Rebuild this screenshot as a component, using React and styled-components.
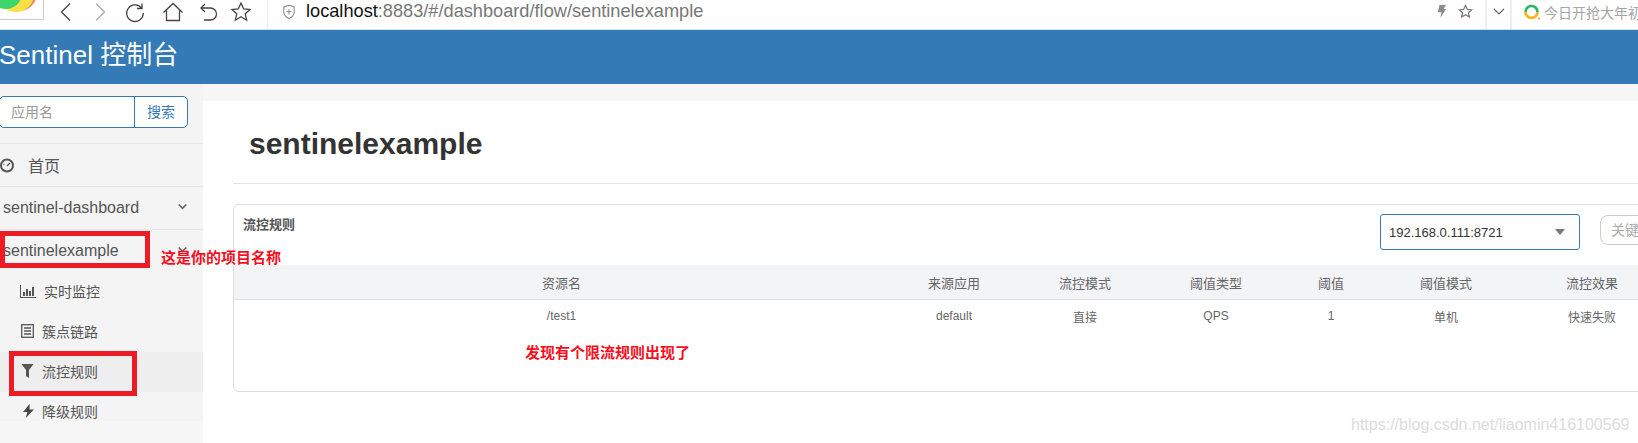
import React from 'react'
import styled, { createGlobalStyle } from 'styled-components'

const FONT = `"Liberation Sans", "Noto Sans CJK SC", sans-serif`

const GlobalStyle = createGlobalStyle`
  html, body { margin: 0; padding: 0; background: #f7f7f7; overflow: hidden; }
  body { font-family: ${FONT}; color: #555; }
  * { box-sizing: border-box; }
`

const Page = styled.div`
  position: relative;
  width: 1638px;
  height: 443px;
  overflow: hidden;
  display: flex;
  flex-direction: column;
`

/* browser chrome */
const BrowserBar = styled.div`
  height: 30px;
  flex: none;
  background: #fff;
  border-bottom: 1px solid #cfe0ee;
  display: flex;
  align-items: stretch;
  overflow: hidden;
`
const LogoTile = styled.div`
  width: 44px;
  height: 20px;
  flex: none;
  background: #fff;
  border-right: 1px solid #ccc;
  border-bottom: 1px solid #ccc;
  overflow: hidden;
  svg { display: block; }
`
const NavIcons = styled.div`
  width: 224px;
  flex: none;
  padding: 0 0 6px 11px;
  display: flex;
  align-items: center;
  border-right: 1px solid #eee;
`
const NavIcon = styled.svg`
  width: 22px;
  height: 22px;
  margin-right: ${p => p.$gap}px;
  fill: none;
  stroke: ${p => p.$dim ? '#aaa' : '#444'};
  stroke-width: 1.3;
  flex: none;
`
const UrlArea = styled.div`
  flex: 1;
  display: flex;
  align-items: center;
  padding: 0 0 6px 14px;
`
const Url = styled.div`
  font-size: 18.2px;
  color: #777;
  margin-left: 10px;
  span { color: #111; }
`
const RightTools = styled.div`
  display: flex;
  flex: none;
  width: 214px;
  overflow: hidden;
`
const ToolSlot = styled.div`
  flex: none;
  display: flex;
  align-items: center;
  justify-content: center;
  padding-bottom: 6px;
  width: ${p => p.$w}px;
  gap: ${p => p.$gap || 0}px;
  border-right: 2px solid #eee;
`
const SearchHint = styled.div`
  display: flex;
  align-items: center;
  gap: 4px;
  padding: 0 0 6px 12px;
  font-size: 14px;
  color: #a5a5a5;
  white-space: nowrap;
`

/* app header */
const Header = styled.header`
  height: 54px;
  flex: none;
  background: #337ab7;
  color: #fff;
  font-size: 26px;
  line-height: 51px;
  text-indent: -1px;
`

const Body = styled.div`
  flex: 1;
  display: flex;
  min-height: 0;
`

/* sidebar */
const Sidebar = styled.aside`
  width: 203px;
  height: 337px;
  flex: none;
  background: #f4f4f4;
  overflow: hidden;
`
const SearchWrap = styled.div`
  height: 60px;
  padding: 12px 15px 0 0;
  border-bottom: 1px solid #e7e7e7;
`
const SearchGroup = styled.div`
  display: flex;
  height: 32px;
  margin-left: -1px;
  border: 1px solid #337ab7;
  border-radius: 5px;
  background: #fff;
`
const SearchInput = styled.div`
  flex: 1;
  padding-left: 11px;
  font-size: 14px;
  line-height: 30px;
  color: #999;
`
const SearchBtn = styled.div`
  width: 53px;
  border-left: 1px solid #337ab7;
  color: #337ab7;
  font-size: 14px;
  line-height: 31px;
  text-align: center;
`
const HomeRow = styled.div`
  height: 43px;
  display: flex;
  align-items: center;
  font-size: 16px;
  color: #555;
  border-bottom: 1px solid #e7e7e7;
  svg { margin-right: 13px; flex: none; }
`
const AppRow = styled.div`
  height: ${p => p.$plain ? '42px' : '43px'};
  display: flex;
  align-items: center;
  justify-content: space-between;
  padding: 0 16px 0 3px;
  font-size: 16px;
  color: #555;
  border-bottom: ${p => p.$plain ? 'none' : '1px solid #e7e7e7'};
`
const Chevron = styled.svg`
  width: 9px;
  height: 7px;
  margin-top: -3px;
  fill: none;
  stroke: #666;
  stroke-width: 1.6;
`
const SubRow = styled.div`
  height: 40px;
  display: flex;
  align-items: center;
  font-size: 14px;
  color: #555;
  padding: 0 0 2px ${p => p.$pad}px;
  background: ${p => p.$active ? '#eee' : 'transparent'};
  svg { margin-right: 8px; flex: none; }
`

/* content */
const Content = styled.main`
  flex: 1;
  min-width: 0;
  margin-top: 17px;
  background: #fff;
  padding: 0 0 0 30px;
`
const Title = styled.h1`
  margin: 0;
  height: 83px;
  padding-left: 16px;
  font-size: 30px;
  font-weight: 700;
  line-height: 86px;
  color: #333;
  border-bottom: 1px solid #e5e5e5;
`
const Card = styled.section`
  width: 1500px;
  height: 188px;
  margin-top: 20px;
  border: 1px solid #ddd;
  border-radius: 6px;
  background: #fff;
`
const CardTop = styled.div`
  height: 60px;
  display: flex;
`
const CardTitle = styled.div`
  width: 1146px;
  flex: none;
  padding: 9px 0 0 9px;
  font-size: 13px;
  font-weight: 700;
  color: #555;
`
const Select = styled.div`
  width: 200px;
  height: 36px;
  margin-top: 9px;
  flex: none;
  border: 1px solid #337ab7;
  border-radius: 3px;
  padding: 0 14px 0 8px;
  display: flex;
  align-items: center;
  justify-content: space-between;
  font-size: 13px;
  color: #333;
  &::after {
    content: '';
    border-left: 5px solid transparent;
    border-right: 5px solid transparent;
    border-top: 6px solid #777;
  }
`
const Keyword = styled.div`
  width: 120px;
  height: 30px;
  margin: 10px 0 0 20px;
  flex: none;
  border: 1px solid #ccc;
  border-radius: 8px;
  padding-left: 10px;
  font-size: 14px;
  line-height: 28px;
  color: #aaa;
`
const Grid = styled.div`
  display: grid;
  grid-template-columns: 655px 130px 132px 130px 100px 130px 162px;
  align-items: center;
  text-align: center;
  font-size: ${p => p.$head ? '13px' : '12px'};
  color: #666;
  height: ${p => p.$head ? '35px' : '32px'};
  background: ${p => p.$head ? '#f3f4f6' : 'transparent'};
  border-bottom: ${p => p.$head ? '1px solid #ddd' : 'none'};
`

/* screenshot annotations drawn over the page */
const RedBox = styled.div`
  position: absolute;
  left: ${p => p.$x}px;
  top: ${p => p.$y}px;
  width: ${p => p.$w}px;
  height: ${p => p.$h}px;
  border: 5px solid #ed1c24;
`
const RedNote = styled.div`
  position: absolute;
  left: ${p => p.$x}px;
  top: ${p => p.$y}px;
  font-size: 15px;
  font-weight: 700;
  line-height: 18px;
  color: #f5101f;
  white-space: nowrap;
`
const Watermark = styled.div`
  position: absolute;
  left: 1351px;
  top: 415px;
  font-size: 16px;
  line-height: 20px;
  color: #dcdcdc;
  white-space: nowrap;
`

const HEADERS = ['资源名', '来源应用', '流控模式', '阈值类型', '阈值', '阈值模式', '流控效果']
const ROW = ['/test1', 'default', '直接', 'QPS', '1', '单机', '快速失败']

function DownChevron() {
  return (
    <Chevron viewBox="0 0 9 7"><path d="M.7 1.500L4.500 5.300 8.300 1.500" /></Chevron>
  )
}

function App() {
  return (
    <Page>
      <GlobalStyle />
      <BrowserBar>
        <LogoTile>
          <svg width="43" height="19" viewBox="0 0 43 19">
            <circle cx="19" cy="-7" r="18" fill="#f6826f" />
            <circle cx="16" cy="-6" r="18" fill="#fde047" />
            <circle cx="6" cy="-7" r="16" fill="#3ed66b" />
          </svg>
        </LogoTile>
        <NavIcons>
          <NavIcon $gap={12} viewBox="0 0 22 22"><path d="M15 2.500L6.500 11l8.500 8.500" /></NavIcon>
          <NavIcon $gap={13} $dim viewBox="0 0 22 22"><path d="M7 2.500l8.500 8.500L7 19.500" /></NavIcon>
          <NavIcon $gap={16} viewBox="0 0 22 22"><path d="M17.500 7A8.300 8.300 0 1 0 19.300 12M18 2.500V7.500h-5" /></NavIcon>
          <NavIcon $gap={13} viewBox="0 0 22 22"><path d="M1.500 11.500L11 2.500l9.500 9M4.500 9.500v10h13v-10" /></NavIcon>
          <NavIcon $gap={11} viewBox="0 0 22 22"><path d="M8 3L4 7l4 4M4 7h9.500a5.800 5.800 0 0 1 0 12H7" /></NavIcon>
          <NavIcon $gap={0} viewBox="0 0 22 22"><path d="M11 2l2.700 6 6.300.6-4.800 4.200 1.500 6.400L11 15.800l-5.700 3.400 1.500-6.400L2 8.600 8.300 8z" /></NavIcon>
        </NavIcons>
        <UrlArea>
          <svg width="14" height="16" viewBox="0 0 16 20" fill="none" stroke="#888" strokeWidth="1.300">
            <path d="M8 1.500l6.500 2.200v6.300c0 3.700-2.700 6.500-6.500 8-3.800-1.500-6.500-4.300-6.500-8V3.700zM8 6.500v6.500M4.800 9.700h6.400" />
          </svg>
          <Url><span>localhost</span>:8883/#/dashboard/flow/sentinelexample</Url>
        </UrlArea>
        <RightTools>
          <ToolSlot $w={63} $gap={12}>
            <svg width="9" height="15" viewBox="0 0 11 16"><path d="M3 0h8L8 5h3L4 16l1.500-7H1z" fill="#8c8c8c" /></svg>
            <svg width="15" height="15" viewBox="0 0 22 22" fill="none" stroke="#777" strokeWidth="1.800"><path d="M11 2l2.700 6 6.300.6-4.800 4.200 1.500 6.400L11 15.800l-5.700 3.400 1.500-6.400L2 8.600 8.300 8z" /></svg>
          </ToolSlot>
          <ToolSlot $w={25}>
            <svg width="12" height="8" viewBox="0 0 12 8" fill="none" stroke="#666" strokeWidth="1.200"><path d="M1 1l5 5 5-5" /></svg>
          </ToolSlot>
          <SearchHint>
            <svg width="16" height="16" viewBox="0 0 16 16" fill="none" strokeWidth="2.600">
              <path d="M1.500 8a6 6 0 0 1 12 0" stroke="#25b864" />
              <path d="M1.500 8a6 6 0 0 0 12 0" stroke="#fbb117" />
              <rect x="14" y="13.500" width="2" height="2" fill="#fbb117" stroke="none" />
            </svg>
            今日开抢大年初一
          </SearchHint>
        </RightTools>
      </BrowserBar>

      <Header>Sentinel 控制台</Header>

      <Body>
        <Sidebar>
          <SearchWrap>
            <SearchGroup>
              <SearchInput>应用名</SearchInput>
              <SearchBtn>搜索</SearchBtn>
            </SearchGroup>
          </SearchWrap>
          <HomeRow>
            <svg width="15" height="15" viewBox="0 0 15 15" fill="none" stroke="#555" strokeWidth="2">
              <circle cx="7" cy="7.500" r="6" />
              <path d="M7 8l3-3M3.500 6.500h1" strokeWidth="1.300" />
            </svg>
            首页
          </HomeRow>
          <AppRow>sentinel-dashboard<DownChevron /></AppRow>
          <AppRow $plain>sentinelexample<DownChevron /></AppRow>
          <SubRow $pad={20}>
            <svg width="16" height="13" viewBox="0 0 16 13" fill="#555">
              <path d="M0 0h1v12h15v1H0zM3 7h2v4H3zM6 4h2v7H6zM9 6h2v5H9zM12 2h2v9h-2z" />
            </svg>
            实时监控
          </SubRow>
          <SubRow $pad={21}>
            <svg width="13" height="14" viewBox="0 0 13 14" fill="none" stroke="#555" strokeWidth="1.300">
              <rect x=".7" y=".7" width="11.600" height="12.600" />
              <path d="M3 4h7M3 7h7M3 10h7" />
            </svg>
            簇点链路
          </SubRow>
          <SubRow $pad={21} $active>
            <svg width="13" height="14" viewBox="0 0 12 14" fill="#555"><path d="M0 0h12L7.500 6v8l-3-2V6z" /></svg>
            流控规则
          </SubRow>
          <SubRow $pad={23}>
            <svg width="11" height="14" viewBox="0 0 10 13" fill="#444"><path d="M6 0L0 7.500h4L2.500 13 10 5H6z" /></svg>
            降级规则
          </SubRow>
        </Sidebar>

        <Content>
          <Title>sentinelexample</Title>
          <Card>
            <CardTop>
              <CardTitle>流控规则</CardTitle>
              <Select>192.168.0.111:8721</Select>
              <Keyword>关键字</Keyword>
            </CardTop>
            <Grid $head>{HEADERS.map(h => <div key={h}>{h}</div>)}</Grid>
            <Grid>{ROW.map(c => <div key={c}>{c}</div>)}</Grid>
          </Card>
        </Content>
      </Body>

      <RedBox $x={0} $y={231} $w={150} $h={37} />
      <RedBox $x={9} $y={351} $w={128} $h={45} />
      <RedNote $x={161} $y={249}>这是你的项目名称</RedNote>
      <RedNote $x={525} $y={344}>发现有个限流规则出现了</RedNote>
      <Watermark>https://blog.csdn.net/liaomin416100569</Watermark>
    </Page>
  )
}

export default App
